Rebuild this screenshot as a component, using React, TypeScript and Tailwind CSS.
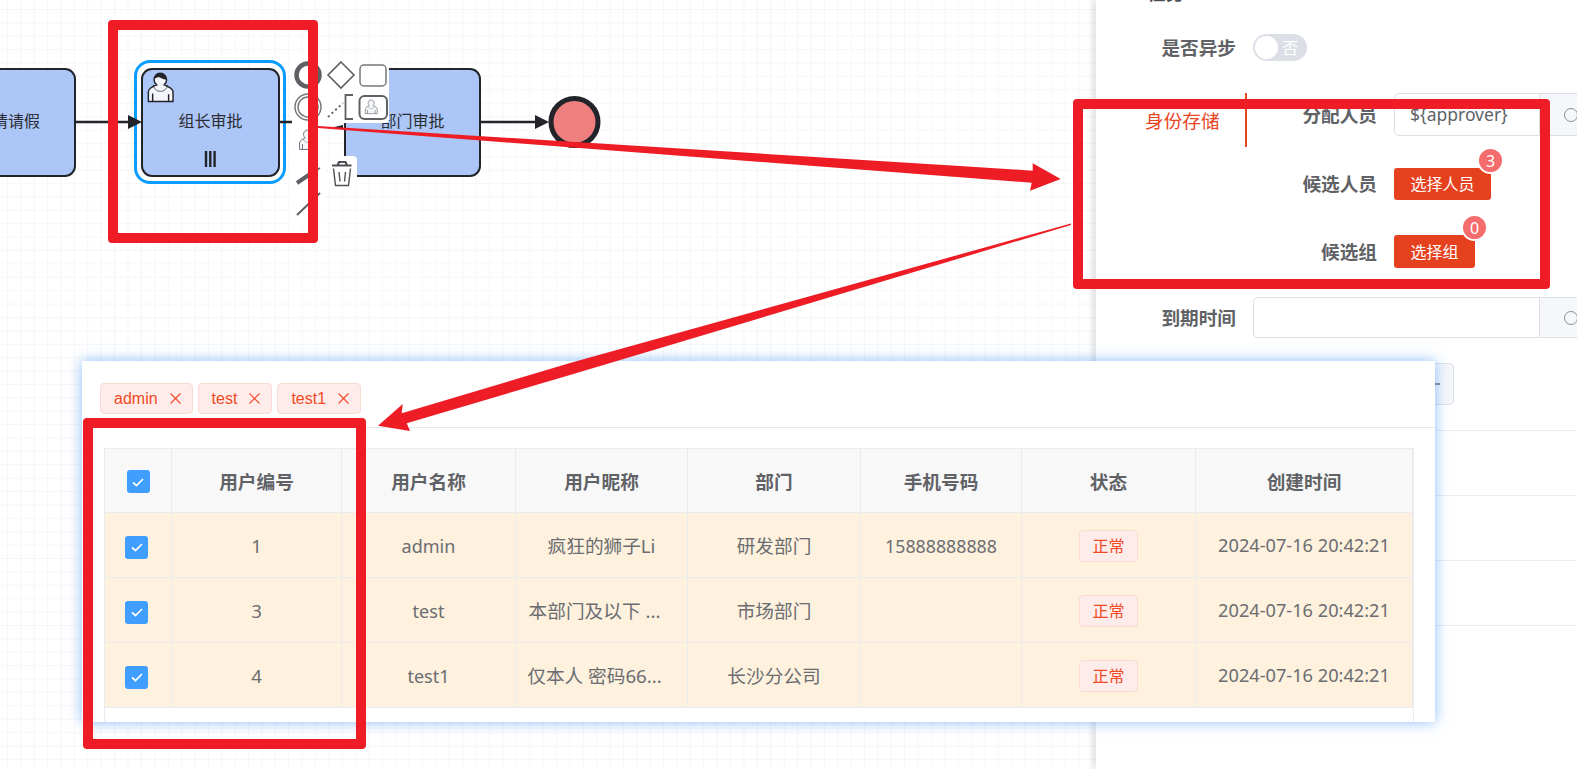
const users = [
  { id: "1", name: "admin", nick: "疯狂的狮子Li", dept: "研发部门", phone: "15888888888", clipped: false },
  { id: "3", name: "test", nick: "本部门及以下 ...", dept: "市场部门", phone: "", clipped: true },
  { id: "4", name: "test1", nick: "仅本人 密码66...", dept: "长沙分公司", phone: "", clipped: true },
];

const headers = ["用户编号", "用户名称", "用户昵称", "部门", "手机号码", "状态", "创建时间"];

const cellLine = "border-r border-b border-[#e9ebef]";
const nodeStyle =
  "absolute top-[68px] h-[109px] rounded-[11px] border-[2.5px] border-[#22242a] bg-[#abc6f7] flex items-center justify-center pb-[3px] text-base text-[#2b2d33]";

function UserGlyph({ transform, color = "#22242a" }: { transform: string; color?: string }) {
  return (
    <g transform={transform} fill="none" stroke={color} strokeWidth={1}>
      <path
        fill="#f4f6fb"
        d="m 15,12 c 0.909,-0.845 1.594,-2.049 1.594,-3.385 0,-2.554 -1.805,-4.622 -4.357,-4.622 -2.552,0 -4.288,2.068 -4.288,4.622 0,1.348 0.974,2.562 1.896,3.405 -0.529,0.187 -5.669,2.097 -5.794,4.756 v 6.718 h 17 v -6.718 c 0,-2.298 -5.528,-4.595 -6.051,-4.776 z m -8,6 l 0,5.5 m 11,0 l 0,-5"
      />
      <path strokeWidth={0.5} d="m 15,12 m 2.162,1.009 c 0,2.447 -2.158,4.431 -4.821,4.431 -2.665,0 -4.822,-1.981 -4.822,-4.431" transform="translate(0,-1)" />
      {color === "#22242a" && (
        <path
          fill="#22242a"
          stroke="none"
          d="m 15,12 m -6.9,-3.8 c 0,0 2.251,-2.358 4.274,-1.177 2.024,1.181 4.221,1.537 4.124,0.965 -0.098,-0.57 -0.117,-3.791 -4.191,-4.136 -3.575,0.001 -4.208,3.367 -4.207,4.348 z"
        />
      )}
    </g>
  );
}

function Diagram() {
  return (
    <>
      {/* Tasks */}
      <div className={`${nodeStyle} left-[-60px] w-[136px]`}>申请请假</div>
      <div className="absolute left-[134px] top-[60px] w-[152px] h-[124px] rounded-[16px] border-[3px] border-[#0a9cff]" />
      <div className={`${nodeStyle} left-[141px] w-[139px]`}>组长审批</div>
      <div className={`${nodeStyle} left-[344px] w-[137px]`}>部门审批</div>

      <svg className="absolute left-0 top-0" width="1096" height="300" viewBox="0 0 1096 300">
        {/* Flows */}
        <path d="M75 122H130M279 122H294M480 122H540" stroke="#22242a" strokeWidth={2.4} fill="none" />
        <polygon points="128,115 142,122 128,129" fill="#22242a" />
        <polygon points="535,115 549,122 535,129" fill="#22242a" />
        <circle cx="574.5" cy="122" r="23.5" fill="#f08080" stroke="#22242a" strokeWidth={5} />

        {/* Task decorations */}
        <UserGlyph transform="translate(142.5 67.5) scale(1.45)" />
        <path d="M206 151V167M210.3 151V167M214.6 151V167" stroke="#22242a" strokeWidth={2.4} />

        {/* Context pad */}
        <rect x="292" y="60" width="33" height="165" fill="#ffffff" />
        <rect x="322" y="60" width="67" height="63" rx="4" fill="#ffffff" />
        <rect x="327" y="156" width="30" height="33" rx="4" fill="#ffffff" />
        <polygon points="330,128 343,125 343,128" fill="#22242a" />
        <circle cx="308" cy="75" r="11.5" fill="none" stroke="#5f6063" strokeWidth={4.5} />
        <polygon points="341,62 354,75 341,88 328,75" fill="none" stroke="#5f6063" strokeWidth={1.6} />
        <rect x="360" y="65" width="26" height="21" rx="4" fill="#ffffff" stroke="#77787b" strokeWidth={1.5} />
        <circle cx="308" cy="107" r="13" fill="none" stroke="#77787b" strokeWidth={1.5} />
        <circle cx="308" cy="107" r="10" fill="none" stroke="#77787b" strokeWidth={1.5} />
        <path d="M328 117L343 103" stroke="#5f6063" strokeWidth={2} strokeDasharray="2 3" />
        <path d="M353 95H345.5V119H353" stroke="#5f6063" strokeWidth={1.8} fill="none" />
        <rect x="359.5" y="96" width="27.5" height="23" rx="5" fill="#ffffff" stroke="#606164" strokeWidth={2} />
        <UserGlyph transform="translate(362.5 97.2) scale(0.7)" color="#77787b" />
        <UserGlyph transform="translate(295.5 126) scale(1)" color="#77787b" />
        <path d="M297 183L313 172" stroke="#5f6063" strokeWidth={4} />
        <path d="M313 172L320 168" stroke="#5f6063" strokeWidth={1.5} />
        <path d="M297 215L320 193" stroke="#5f6063" strokeWidth={2} />
        <path d="M332 165.5H351.5M337.5 165.5L339 162H345.5L347 165.5" stroke="#4f5053" strokeWidth={2.2} fill="none" />
        <path d="M333.5 168.5L335.5 185.5H348.5L350.5 168.5M339 172L340 181.5M345.5 172L344.5 181.5" stroke="#4f5053" strokeWidth={1.4} fill="none" />
      </svg>
    </>
  );
}

function AppendedInput({ value, inputWidth }: { value?: string; inputWidth: string }) {
  return (
    <div className="flex h-full">
      <div className={`${inputWidth} shrink-0 h-full border border-[#dcdfe6] rounded-l-[5px] flex items-center pl-[15px] text-[17.5px] text-[#606266]`}>
        {value}
      </div>
      <div className="w-[60px] h-full bg-[#f5f7fa] border-y border-[#dcdfe6] flex items-center pl-[24px] shrink-0">
        <div className="w-[14px] h-[14px] rounded-full border border-[#8b8d91] shrink-0" />
      </div>
    </div>
  );
}

function CountButton({ label, count, width }: { label: string; count: number; width: string }) {
  return (
    <div className={`relative ${width} h-full rounded-[3px] bg-[#e6411f] flex items-center justify-center text-base text-white`}>
      {label}
      <span className="absolute right-[-13px] top-[-21px] w-[27px] h-[27px] rounded-full border-2 border-white bg-[#f56c6c] flex items-center justify-center text-base text-white">
        {count}
      </span>
    </div>
  );
}

function SidePanel() {
  const label = "shrink-0 text-right font-bold text-[18.67px] text-[#606266] whitespace-nowrap";
  return (
    <aside className="relative w-[481px] shrink-0 h-full bg-white overflow-hidden shadow-[-3px_0_7px_rgba(0,0,0,0.13)]">
      <div className="mt-[-22px] h-[30px] pl-[51px] flex items-center font-bold text-[18.67px] text-[#4c4e52]">任务</div>

      <div className="mt-[26px] h-[27px] flex items-center">
        <div className={`${label} w-[140px]`}>是否异步</div>
        <div className="ml-[17px] w-[54px] h-[27px] rounded-full bg-[#dcdfe6] flex items-center pl-[2px]">
          <span className="w-[23px] h-[23px] rounded-full bg-white" />
          <span className="ml-[4px] text-base text-white">否</span>
        </div>
      </div>

      <div className="mt-[32px] flex items-start">
        <div className="ml-[49px] w-[102px] shrink-0 h-[54px] border-r-2 border-[#e8441f] flex items-center pt-[2px] text-[18.67px] text-[#e8441f]">
          身份存储
        </div>
        <div className="flex-1 min-w-0 flex flex-col">
          <div className="h-[43px] flex items-center">
            <div className={`${label} w-[130px]`}>分配人员</div>
            <div className="ml-[17px] h-full shrink-0">
              <AppendedInput value="${approver}" inputWidth="w-[146px]" />
            </div>
          </div>
          <div className="mt-[32px] h-[32px] flex items-center">
            <div className={`${label} w-[130px]`}>候选人员</div>
            <div className="ml-[17px] h-full">
              <CountButton label="选择人员" count={3} width="w-[97px]" />
            </div>
          </div>
          <div className="mt-[35px] h-[33px] flex items-center">
            <div className={`${label} w-[130px]`}>候选组</div>
            <div className="ml-[17px] h-full">
              <CountButton label="选择组" count={0} width="w-[81px]" />
            </div>
          </div>
        </div>
      </div>

      <div className="mt-[29px] h-[41px] flex items-center">
        <div className={`${label} w-[140px]`}>到期时间</div>
        <div className="ml-[17px] h-full shrink-0">
          <AppendedInput inputWidth="w-[287px]" />
        </div>
      </div>

      <div className="mt-[25px] ml-[157px] w-[201px] h-[42px] rounded-[5px] bg-[#f5f7fa] border border-[#dcdfe6] flex items-center justify-end pr-[13px]">
        <span className="w-[6px] h-[2px] bg-[#8b8d91]" />
      </div>

      <div className="mt-[25px] h-px bg-[#ebeef5]" />
      <div className="h-[65px] border-b border-[#ebeef5]" />
      <div className="h-[65px] border-b border-[#ebeef5]" />
      <div className="h-[65px] border-b border-[#ebeef5]" />
    </aside>
  );
}

function Checkbox() {
  return (
    <span className="w-[23px] h-[23px] rounded-[3px] bg-[#409eff] flex items-center justify-center">
      <svg width="14" height="12" viewBox="0 0 14 12" fill="none" stroke="#ffffff" strokeWidth={1.7}>
        <path d="M2 6.5L5.5 9.5L12 3" />
      </svg>
    </span>
  );
}

function Tag({ label }: { label: string }) {
  return (
    <span className="h-[31px] pl-[13px] pr-[11px] rounded-[4px] bg-[#fdecea] border border-[#fbdad4] flex items-center gap-[12px] font-['Liberation_Sans',sans-serif] text-base text-[#f04a25]">
      {label}
      <svg width="11" height="11" viewBox="0 0 11 11" stroke="#f04a25" strokeWidth={1.1}>
        <path d="M0.5 0.5L10.5 10.5M10.5 0.5L0.5 10.5" />
      </svg>
    </span>
  );
}

function UserModal() {
  const row = "h-[65px] bg-[#fef1de] flex items-center justify-center text-[#6b6d71] whitespace-nowrap";
  const head = "h-[64px] bg-[#f8f8f9] flex items-center justify-center pt-[2px]";
  return (
    <div className="absolute left-[82px] top-[361px] w-[1353px] h-[361px] bg-white shadow-[0_0_13px_rgba(64,150,250,0.62)] z-20 flex flex-col">
      <div className="h-[67px] shrink-0 border-b border-[#e6e8ec] pl-[18px] pt-[22px] flex gap-[5px] items-start">
        <Tag label="admin" />
        <Tag label="test" />
        <Tag label="test1" />
      </div>
      <div className="mt-[20px] ml-[22px] w-[1310px] flex-1 border-l border-r border-t border-[#e9ebef]">
        <div className="grid grid-cols-[67px_170px_174px_172px_173px_161px_174px_217px]">
          <div className={`${head} ${cellLine}`}>
            <Checkbox />
          </div>
          {headers.map((h) => (
            <div key={h} className={`${head} ${cellLine} font-bold text-[18.67px] text-[#606266]`}>
              {h}
            </div>
          ))}
          {users.map((u) => (
            <div key={u.id} className="contents">
              <div className={`${row} ${cellLine} pt-[4px] pr-[3px]`}>
                <Checkbox />
              </div>
              <div className={`${row} ${cellLine} pt-[2px] text-[18.67px]`}>{u.id}</div>
              <div className={`${row} ${cellLine} pt-[2px] text-[18px]`}>{u.name}</div>
              <div className={`${row} ${cellLine} pt-[2px] text-[18.67px] ${u.clipped ? "pr-[14px]" : ""}`}>{u.nick}</div>
              <div className={`${row} ${cellLine} pt-[2px] text-[18.67px]`}>{u.dept}</div>
              <div className={`${row} ${cellLine} pt-[2px] text-[17.8px]`}>{u.phone}</div>
              <div className={`${row} ${cellLine} pt-[2px]`}>
                <span className="w-[59px] h-[32px] rounded-[4px] bg-[#fdecea] border border-[#fbdad4] flex items-center justify-center text-base text-[#f04a25]">
                  正常
                </span>
              </div>
              <div className={`${row} ${cellLine} pt-[2px] text-[18.2px]`}>2024-07-16 20:42:21</div>
            </div>
          ))}
        </div>
      </div>
    </div>
  );
}

function Annotations() {
  const box = "absolute border-[10px] border-[#ee1c25] rounded-[4px] z-30";
  return (
    <>
      <div className={`${box} left-[108px] top-[20px] w-[210px] h-[223px]`} />
      <div className={`${box} left-[1073px] top-[99px] w-[477px] h-[190px]`} />
      <div className={`${box} left-[83px] top-[418px] w-[283px] h-[331px]`} />
      <svg className="absolute left-0 top-0 z-30 pointer-events-none" width="1577" height="769" viewBox="0 0 1577 769">
        <polygon
          fill="#ee1c25"
          points="318,126 960,166 1032.7,170.7 1032.7,163.3 1060.7,179 1030,190.7 1031.7,182.7 960,177.3 318,128"
        />
        <polygon
          fill="#ee1c25"
          points="1071,223.5 1071,225 570,375 406.7,423.3 410,431 378,425.7 402.7,404 401.7,413.3 570,363"
        />
      </svg>
    </>
  );
}

export default function App() {
  return (
    <div className="relative flex h-screen w-full overflow-hidden bg-white font-['Noto_Sans','Noto_Sans_CJK_SC',sans-serif]">
      <div className="relative flex-1 h-full overflow-hidden bg-white bg-[linear-gradient(#f6f6f7_1px,transparent_1px),linear-gradient(90deg,#f6f6f7_1px,transparent_1px)] bg-[length:13.4px_13.4px] bg-[position:7px_9px]">
        <Diagram />
      </div>
      <SidePanel />
      <UserModal />
      <Annotations />
    </div>
  );
}
